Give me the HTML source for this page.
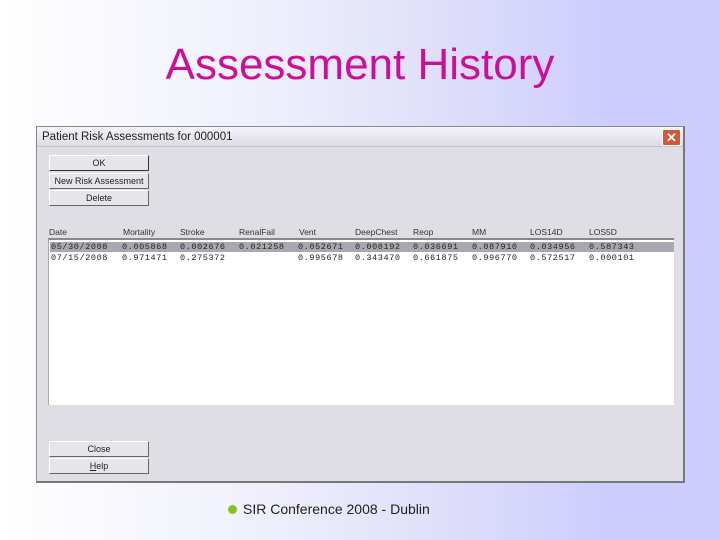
<!DOCTYPE html>
<html><head><style>
body{margin:0;width:720px;height:540px;overflow:hidden;position:relative;font-family:"Liberation Sans",sans-serif;
background:linear-gradient(90deg,#ffffff 0%,#f0f0fc 35%,#dcdcfa 65%,#ccccff 85%,#ccccff 100%);}
.t{position:absolute;top:40px;left:0;width:720px;text-align:center;font-size:44px;color:#cc0e99;}
.dlg{position:absolute;left:36px;top:126px;width:646px;height:354px;background:#dfdee4;border:1px solid #8a8a96;border-right:2px solid #777;border-bottom:2px solid #777;}
.tb{position:absolute;left:0;top:0;right:0;height:19px;background:linear-gradient(#f4f4f8,#dcdce6);border-bottom:1px solid #c4c4cc;font-size:11.5px;color:#222;line-height:21px;padding-left:5px;}
.x{position:absolute;right:2px;top:2px;width:17px;height:15px;background:#d9553a;border:1px solid #fff;border-radius:2px;color:#fff;font-size:13px;line-height:15px;text-align:center;font-weight:bold;}
.b{position:absolute;left:12px;width:98px;height:14px;background:#e6e6ea;border:1px solid #fff;border-right:1px solid #666;border-bottom:1px solid #666;font-size:9px;text-align:center;line-height:14px;color:#222;}
.h{position:absolute;top:100px;font-size:8.5px;color:#333;}
.list{position:absolute;left:11px;top:111px;width:625px;height:165px;background:#fff;border-top:2px solid #888;border-left:1px solid #aaa;}
.sel{position:absolute;left:1px;top:2px;right:0;height:10px;background:#a8a8b0;}
.r{position:absolute;font-family:"Liberation Mono",monospace;font-size:8.5px;color:#222;letter-spacing:0.6px;}
.f{position:absolute;top:501px;left:228px;font-size:14px;color:#222;}
.dot{display:inline-block;width:9px;height:9px;border-radius:50%;background:#88c020;margin-right:6px;}
</style></head><body>
<div class="t">Assessment History</div>
<div class="dlg">
<div class="tb">Patient Risk Assessments for 000001<div class="x">✕</div></div>
<div class="b" style="top:28px;border:1px solid #333;border-top-color:#fff;border-left-color:#fff">OK</div>
<div class="b" style="top:46px">New Risk Assessment</div>
<div class="b" style="top:63px">Delete</div>
<div class="h" style="left:12px">Date</div><div class="h" style="left:86px">Mortality</div><div class="h" style="left:143px">Stroke</div><div class="h" style="left:202px">RenalFail</div><div class="h" style="left:262px">Vent</div><div class="h" style="left:318px">DeepChest</div><div class="h" style="left:376px">Reop</div><div class="h" style="left:435px">MM</div><div class="h" style="left:493px">LOS14D</div><div class="h" style="left:552px">LOS5D</div>
<div class="list"><div class="sel"></div>
<div class="r" style="top:2px;left:2px">05/30/2008</div><div class="r" style="top:2px;left:73px">0.005868</div><div class="r" style="top:2px;left:131px">0.002676</div><div class="r" style="top:2px;left:190px">0.021258</div><div class="r" style="top:2px;left:249px">0.052671</div><div class="r" style="top:2px;left:306px">0.008192</div><div class="r" style="top:2px;left:364px">0.036691</div><div class="r" style="top:2px;left:423px">0.087910</div><div class="r" style="top:2px;left:481px">0.034956</div><div class="r" style="top:2px;left:540px">0.587343</div>
<div class="r" style="top:13px;left:2px">07/15/2008</div><div class="r" style="top:13px;left:73px">0.971471</div><div class="r" style="top:13px;left:131px">0.275372</div><div class="r" style="top:13px;left:249px">0.995678</div><div class="r" style="top:13px;left:306px">0.343470</div><div class="r" style="top:13px;left:364px">0.661875</div><div class="r" style="top:13px;left:423px">0.996770</div><div class="r" style="top:13px;left:481px">0.572517</div><div class="r" style="top:13px;left:540px">0.000101</div>
</div>
<div class="b" style="top:314px">Close</div>
<div class="b" style="top:331px"><u>H</u>elp</div>
</div>
<div class="f"><span class="dot"></span>SIR Conference 2008 - Dublin</div>
</body></html>
